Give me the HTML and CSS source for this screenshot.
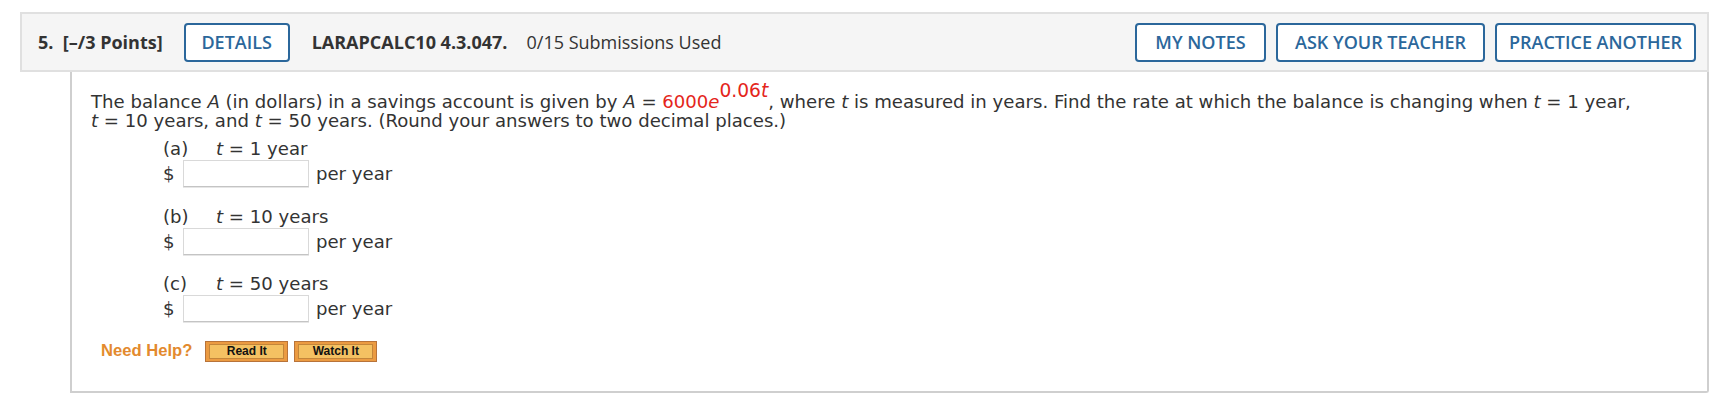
FILE: index.html
```html
<!DOCTYPE html>
<html lang="en">
<head>
<meta charset="utf-8">
<title>Question 5</title>
<link rel="stylesheet" href="styles.css">
</head>
<body>
<div class="question">
  <div class="q-header">
    <div class="q-left">
      <span class="q-num">5.&nbsp; [–/3 Points]</span>
      <button class="hbtn hbtn-details">DETAILS</button>
      <span class="q-code">LARAPCALC10 4.3.047.</span>
      <span class="q-subs">0/15 Submissions Used</span>
    </div>
    <div class="q-right">
      <button class="hbtn hbtn-notes">MY NOTES</button>
      <button class="hbtn hbtn-ask">ASK YOUR TEACHER</button>
      <button class="hbtn hbtn-practice">PRACTICE ANOTHER</button>
    </div>
  </div>
  <div class="q-body">
    <p class="prompt">The balance <i>A</i> (in dollars) in a savings account is given by <i>A</i> = <span class="red">6000<i>e</i><span class="sup">0.06<i>t</i></span></span>, where <i>t</i> is measured in years. Find the rate at which the balance is changing when <i>t</i> = 1 year,<br><i>t</i> = 10 years, and <i>t</i> = 50 years. (Round your answers to two decimal places.)</p>
    <div class="parts">
      <div class="part">
        <div class="part-label"><span class="letter">(a)</span><span class="cond"><i>t</i> = 1 year</span></div>
        <div class="answer"><span class="dollar">$</span><input class="ans-input" type="text"><span class="unit">per year</span></div>
      </div>
      <div class="part">
        <div class="part-label"><span class="letter">(b)</span><span class="cond"><i>t</i> = 10 years</span></div>
        <div class="answer"><span class="dollar">$</span><input class="ans-input" type="text"><span class="unit">per year</span></div>
      </div>
      <div class="part">
        <div class="part-label"><span class="letter">(c)</span><span class="cond"><i>t</i> = 50 years</span></div>
        <div class="answer"><span class="dollar">$</span><input class="ans-input" type="text"><span class="unit">per year</span></div>
      </div>
    </div>
    <div class="help">
      <span class="help-label">Need Help?</span>
      <button class="helpbtn"><span class="helpbtn-inner">Read It</span></button>
      <button class="helpbtn"><span class="helpbtn-inner">Watch It</span></button>
    </div>
  </div>
</div>
</body>
</html>
```
FILE: styles.css
```css
html, body {
  margin: 0;
  padding: 0;
  background: #ffffff;
}

.question {
  margin: 12px 0 0 20px;
  width: 1689px;
}

.q-header {
  box-sizing: border-box;
  height: 60px;
  background: #f5f5f5;
  border: 2px solid #e0e0e0;
  display: flex;
  align-items: center;
  justify-content: space-between;
  padding: 0 11px 0 16px;
  font-family: "Open Sans", "Liberation Sans", sans-serif;
  color: #333333;
  font-size: 18px;
}

.q-left {
  display: flex;
  align-items: center;
}

.q-right {
  display: flex;
  align-items: center;
  gap: 10px;
}

.q-num {
  font-weight: 700;
  margin-right: 21px;
}

.q-code {
  font-weight: 700;
  margin-left: 22px;
  margin-right: 19px;
}

.hbtn {
  box-sizing: border-box;
  height: 39px;
  padding: 0 8px;
  background: #ffffff;
  border: 2px solid #2b679b;
  border-radius: 4px;
  color: #2b679b;
  font-family: "Open Sans", "Liberation Sans", sans-serif;
  font-weight: 600;
  font-size: 18px;
  line-height: 1;
  text-align: center;
  cursor: pointer;
}

.hbtn-details { width: 106px; }
.hbtn-notes { width: 131px; }
.hbtn-ask { width: 209px; }
.hbtn-practice { width: 201px; }

.q-body {
  box-sizing: border-box;
  margin-left: 50px;
  height: 321px;
  border: 2px solid #cfcfcf;
  border-top: none;
  border-bottom-right-radius: 3px;
  padding: 0 0 0 19px;
  font-family: "DejaVu Sans", Verdana, sans-serif;
  font-size: 18.1px;
  color: #333333;
}

.prompt {
  margin: 0;
  padding-top: 21px;
  line-height: 18.6px;
}

.red {
  color: #e4251b;
}

.sup {
  position: relative;
  top: -0.6em;
  font-size: 1.03em;
}

.parts {
  margin-top: 8px;
  padding-left: 72px;
}

.part {
  margin-bottom: 18.5px;
}

.part-label {
  display: flex;
  height: 22px;
  line-height: 22px;
}

.letter {
  width: 53px;
}

.answer {
  display: flex;
  align-items: center;
  height: 27px;
}

.dollar {
  width: 20px;
}

.ans-input {
  box-sizing: border-box;
  width: 126px;
  height: 27px;
  margin: 0 7px 0 0;
  border: 1px solid #d9d9d9;
  border-bottom-color: #c4c4c4;
  box-shadow: 0 1px 0 #e6e6e6;
  background: #ffffff;
  padding: 0;
}

.help {
  display: flex;
  align-items: center;
  margin-left: 10px;
  margin-top: 2px;
  gap: 6px;
}

.help-label {
  font-family: "Liberation Sans", Arial, sans-serif;
  font-weight: 700;
  font-size: 16.6px;
  color: #e38a2e;
  margin-right: 7px;
}

.helpbtn {
  box-sizing: border-box;
  width: 83px;
  height: 21px;
  padding: 2px 3px;
  background: #eb9b42;
  border: 1px solid #b8733a;
  display: flex;
  cursor: pointer;
}

.helpbtn-inner {
  flex: 1;
  display: flex;
  align-items: center;
  justify-content: center;
  background: #f4c162;
  border: 1px solid #c4863a;
  font-family: "Liberation Sans", Arial, sans-serif;
  font-weight: 700;
  font-size: 12px;
  color: #111111;
}
```
